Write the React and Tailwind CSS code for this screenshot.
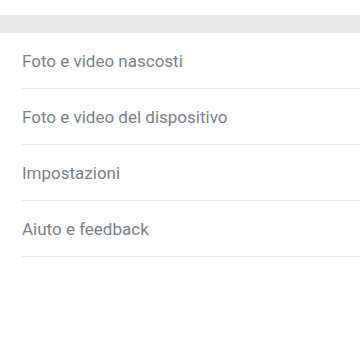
export default function App() {
  const items = [
    "Foto e video nascosti",
    "Foto e video del dispositivo",
    "Impostazioni",
    "Aiuto e feedback",
  ];
  return (
    <div className="w-[360px] h-[360px] bg-white overflow-hidden" style={{ fontFamily: "Roboto, 'Noto Sans', sans-serif" }}>
      <div className="h-[15px]" />
      <div className="h-[18px] bg-[#e8e8e8]" />
      <div className="flex flex-col">
        {items.map((t) => (
          <div key={t} className="pl-[22px]">
            <div className="h-[56px] pt-[2px] flex items-center border-b border-[#ebebeb] text-[17px] text-[#7a7f8c]">
              {t}
            </div>
          </div>
        ))}
      </div>
    </div>
  );
}
